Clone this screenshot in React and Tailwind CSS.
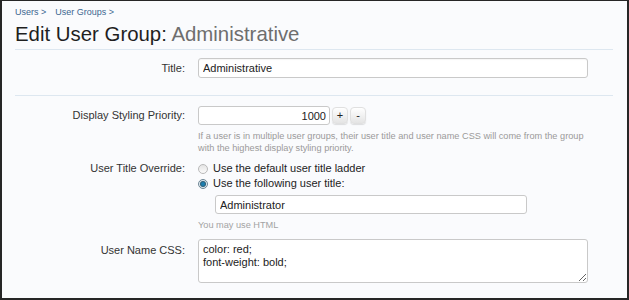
import React from 'react';

const font = "font-['Liberation_Sans',Arial,sans-serif]";

const Row = ({ label, labelClass = 'leading-[20px]', children, className = '' }) => (
  <div className={`flex ${className}`}>
    <div className={`w-[170px] shrink-0 text-right text-[11px] text-[#333] ${labelClass}`}>{label}</div>
    <div className="ml-[13px] flex-1">{children}</div>
  </div>
);

const Radio = ({ checked }) => (
  <span
    className={`relative inline-block h-[10px] w-[10px] shrink-0 rounded-full border ${
      checked ? 'border-[#6f8796] bg-[#dfe9ef]' : 'border-[#b9b9b9] bg-gradient-to-b from-[#e4e4e4] to-[#fbfbfb]'
    }`}
  >
    {checked && <span className="absolute left-[2px] top-[2px] h-[4px] w-[4px] rounded-full bg-[#1c7fb0] shadow-[0_0_0_1px_#2f5f78]" />}
  </span>
);

const SpinButton = ({ children }) => (
  <button className="ml-[2px] flex h-[17px] w-[16px] items-center justify-center rounded-[4px] border border-[#e0e0e0] bg-gradient-to-b from-[#ffffff] to-[#e4e4e4] text-[11px] leading-none text-[#222] shadow-[0_1px_1px_rgba(0,0,0,0.12)]">
    {children}
  </button>
);

export default function App() {
  return (
    <div className={`h-[300px] w-[629px] overflow-hidden border-t border-b-2 border-l-2 border-r-2 border-[#262626] bg-[#fafbfd] ${font}`}>
      <div className="pl-[13px] pr-[14px]">
        {/* Breadcrumb */}
        <div className="pt-[5px] text-[9px] leading-[13px] text-[#3a6690]">
          <span>Users &gt;</span>
          <span className="ml-[9px]">User Groups &gt;</span>
        </div>

        {/* Heading */}
        <h1 className="mt-[3px] text-[20.4px] leading-[25px] text-[#1f1f1f]">
          Edit User Group: <span className="text-[#6e6e6e]">Administrative</span>
        </h1>

        <div className="mt-[2px] border-t border-[#dde7f0]" />

        {/* Title */}
        <Row label="Title:" className="mt-[8px]">
          <input
            readOnly
            defaultValue="Administrative"
            className="block h-[20px] w-[390px] rounded-[3px] border border-[#c9c9c9] bg-white px-[4px] text-[11px] text-[#222] outline-none shadow-[inset_0_1px_1px_rgba(0,0,0,0.04)]"
          />
        </Row>

        <div className="mt-[17px] border-t border-[#dde7f0]" />

        {/* Display Styling Priority */}
        <Row label="Display Styling Priority:" labelClass="leading-[19px]" className="mt-[10px]">
          <div className="flex items-center">
            <input
              readOnly
              defaultValue="1000"
              className="block h-[19px] w-[132px] rounded-[3px] border border-[#c9c9c9] bg-white px-[3px] text-right text-[11px] text-[#222] outline-none"
            />
            <SpinButton>+</SpinButton>
            <SpinButton>-</SpinButton>
          </div>
          <p className="mt-[5px] text-[9.2px] leading-[12px] text-[#9a9a9a]">
            If a user is in multiple user groups, their user title and user name CSS will come from the group
            <br />
            with the highest display styling priority.
          </p>
        </Row>

        {/* User Title Override */}
        <Row label="User Title Override:" labelClass="leading-[15px]" className="mt-[7px]">
          <label className="flex h-[15px] items-center gap-[5px] text-[11px] text-[#222]">
            <Radio />
            Use the default user title ladder
          </label>
          <label className="flex h-[15px] items-center gap-[5px] text-[11px] text-[#222]">
            <Radio checked />
            Use the following user title:
          </label>
          <input
            readOnly
            defaultValue="Administrator"
            className="ml-[17px] mt-[4px] block h-[19px] w-[312px] rounded-[3px] border border-[#c9c9c9] bg-white px-[4px] text-[11px] text-[#222] outline-none"
          />
          <div className="mt-[5px] text-[9.2px] leading-[12px] text-[#a3a3a3]">You may use HTML</div>
        </Row>

        {/* User Name CSS */}
        <Row label="User Name CSS:" labelClass="pt-[4px] leading-[14px]" className="mt-[8px]">
          <textarea
            readOnly
            defaultValue={'color: red;\nfont-weight: bold;'}
            className="block h-[44px] w-[390px] rounded-[3px] border border-[#c9c9c9] bg-white px-[4px] py-[3px] text-[11px] leading-[13px] text-[#222] outline-none"
          />
        </Row>
      </div>
    </div>
  );
}
